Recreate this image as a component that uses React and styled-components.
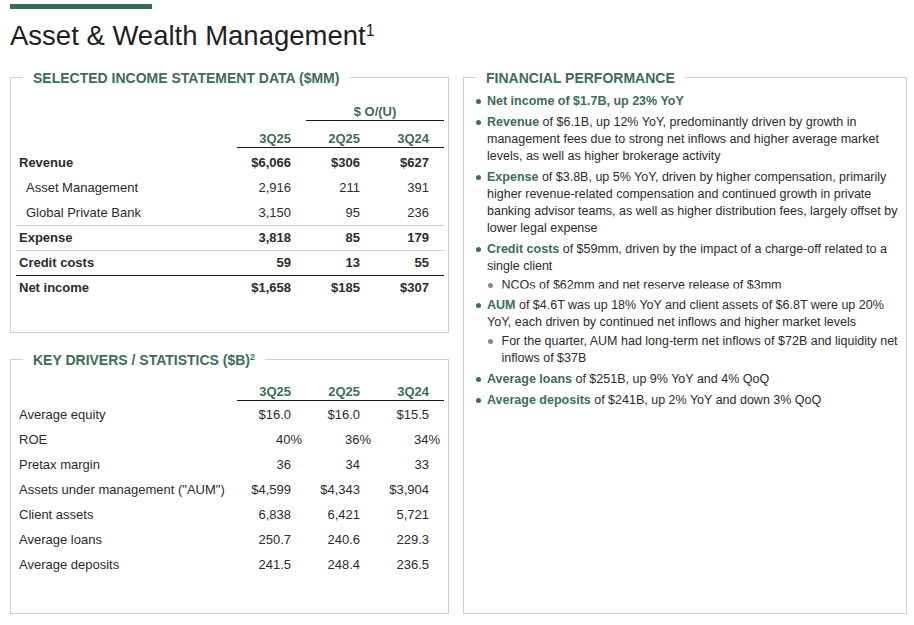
import React from "react";
import styled, { createGlobalStyle } from "styled-components";

const GREEN = "#3d6d57";
const TEXT = "#2b2b2b";

const Global = createGlobalStyle`
  html, body { margin: 0; padding: 0; background: #fff; }
  body { font-family: "Liberation Sans", Arial, sans-serif; color: ${TEXT}; }
  * { box-sizing: border-box; }
`;

const Page = styled.div`
  width: 914px;
  height: 625px;
  padding: 4px 8px 0 10px;
  overflow: hidden;
`;

const TopBar = styled.div`
  width: 142px;
  height: 5px;
  background: #3b6a57;
`;

const Title = styled.h1`
  margin: 12px 0 0;
  font-size: 27.5px;
  line-height: 30px;
  font-weight: normal;
  color: #1f1f1f;
`;

const Sup = styled.sup`
  font-size: ${(p) => p.$size || 16}px;
  line-height: 0;
  vertical-align: ${(p) => p.$lift || 9}px;
`;

const Content = styled.div`
  display: grid;
  grid-template-columns: 439px 444px;
  column-gap: 14px;
  margin-top: 26px;
`;

const Column = styled.div`
  display: flex;
  flex-direction: column;
  gap: 26px;
`;

const Panel = styled.section`
  height: ${(p) => p.$h}px;
  border: 1px solid #cfcfcf;
  display: flex;
  flex-direction: column;
  padding: 0 ${(p) => p.$pr || 4}px 0 5px;
`;

const Legend = styled.h2`
  align-self: flex-start;
  margin: -8px 0 0 7px;
  padding: 0 10px;
  background: #fff;
  font-size: 14px;
  line-height: 16px;
  font-weight: bold;
  color: ${GREEN};
`;

const Row = styled.div`
  display: grid;
  grid-template-columns: 1fr 69px 69px 69px;
  height: 25px;
  line-height: 24px;
  font-size: 13px;
  border-bottom: ${(p) =>
    p.$rule === "dark"
      ? "1.5px solid #1a1a1a"
      : p.$rule === "light"
      ? "1px solid #cfcfcf"
      : "1px solid transparent"};
  font-weight: ${(p) => (p.$bold ? "bold" : "normal")};
`;

const Label = styled.div`
  padding-left: ${(p) => (p.$indent ? 10 : 3)}px;
  white-space: nowrap;
`;

const Val = styled.div`
  text-align: right;
  padding-right: ${(p) => (p.$hang ? 4 : 15)}px;
`;

const OverRow = styled.div`
  display: grid;
  grid-template-columns: 1fr 69px 69px 69px;
  margin-top: 18px;
`;

const OverHead = styled.div`
  grid-column: 3 / 5;
  text-align: center;
  font-size: 13px;
  line-height: 16px;
  font-weight: bold;
  color: ${GREEN};
  border-bottom: 1.5px solid #1a1a1a;
`;

const HeadRow = styled.div`
  display: grid;
  grid-template-columns: 1fr 207px;
  margin-top: ${(p) => p.$mt}px;
  margin-bottom: ${(p) => p.$mb}px;
`;

const HeadCells = styled.div`
  grid-column: 2;
  display: grid;
  grid-template-columns: repeat(3, 69px);
  border-bottom: 1.5px solid #1a1a1a;
`;

const HeadCell = styled.div`
  text-align: right;
  padding-right: 15px;
  font-size: 13px;
  line-height: 16px;
  font-weight: bold;
  color: ${GREEN};
`;

const List = styled.ul`
  list-style: none;
  margin: 7px 0 0;
  padding: 0;
  font-size: 12.5px;
  line-height: 17px;
  color: ${TEXT};
`;

const Item = styled.li`
  display: flex;
  margin-top: ${(p) => (p.$sub ? 2 : 4)}px;
  &:first-child { margin-top: ${(p) => (p.$sub ? 2 : 0)}px; }
`;

const Dot = styled.span`
  flex: none;
  width: ${(p) => (p.$sub ? 4.5 : 5)}px;
  height: ${(p) => (p.$sub ? 4.5 : 5)}px;
  border-radius: 50%;
  background: ${(p) => (p.$sub ? "#8a8a8a" : GREEN)};
  margin: 6px ${(p) => (p.$sub ? 9 : 6)}px 0 ${(p) => (p.$sub ? 1 : 7)}px;
`;

const Body = styled.div`
  flex: 1;
  min-width: 0;
`;

const Line = styled.div`
  height: ${(p) => (p.$clip ? "16px" : "auto")};
  clip-path: ${(p) => (p.$clip ? "inset(0 0 4.5px 0)" : "none")};
`;

const SubList = styled.ul`
  list-style: none;
  margin: 0;
  padding: 0;
`;

const Em = styled.span`
  color: ${GREEN};
  font-weight: bold;
`;

const quarters = ["3Q25", "2Q25", "3Q24"];

const income = [
  { label: "Revenue", v: ["$6,066", "$306", "$627"], bold: true },
  { label: "Asset Management", v: ["2,916", "211", "391"], indent: true },
  { label: "Global Private Bank", v: ["3,150", "95", "236"], indent: true, rule: "light" },
  { label: "Expense", v: ["3,818", "85", "179"], bold: true, rule: "light" },
  { label: "Credit costs", v: ["59", "13", "55"], bold: true, rule: "dark" },
  { label: "Net income", v: ["$1,658", "$185", "$307"], bold: true },
];

const drivers = [
  { label: "Average equity", v: ["$16.0", "$16.0", "$15.5"] },
  { label: "ROE", v: ["40%", "36%", "34%"], hang: true },
  { label: "Pretax margin", v: ["36", "34", "33"] },
  { label: 'Assets under management ("AUM")', v: ["$4,599", "$4,343", "$3,904"] },
  { label: "Client assets", v: ["6,838", "6,421", "5,721"] },
  { label: "Average loans", v: ["250.7", "240.6", "229.3"] },
  { label: "Average deposits", v: ["241.5", "248.4", "236.5"] },
];

function Head({ mt, mb }) {
  return (
    <HeadRow $mt={mt} $mb={mb}>
      <HeadCells>
        {quarters.map((q) => (
          <HeadCell key={q}>{q}</HeadCell>
        ))}
      </HeadCells>
    </HeadRow>
  );
}

function DataRow({ r }) {
  return (
    <Row $bold={r.bold} $rule={r.rule}>
      <Label $indent={r.indent}>{r.label}</Label>
      {r.v.map((x, i) => (
        <Val key={i} $hang={r.hang}>
          {x}
        </Val>
      ))}
    </Row>
  );
}

export default function App() {
  return (
    <Page>
      <Global />
      <TopBar />
      <Title>
        Asset &amp; Wealth Management<Sup>1</Sup>
      </Title>
      <Content>
        <Column>
          <Panel $h={256}>
            <Legend>SELECTED INCOME STATEMENT DATA ($MM)</Legend>
            <OverRow>
              <OverHead>$ O/(U)</OverHead>
            </OverRow>
            <Head mt={10} mb={3} />
            {income.map((r) => (
              <DataRow key={r.label} r={r} />
            ))}
          </Panel>
          <Panel $h={255}>
            <Legend>
              KEY DRIVERS / STATISTICS ($B)<Sup $size={9} $lift={5}>2</Sup>
            </Legend>
            <Head mt={16} mb={2} />
            {drivers.map((r) => (
              <DataRow key={r.label} r={r} />
            ))}
          </Panel>
        </Column>
        <Panel $h={537} $pr={6}>
          <Legend>FINANCIAL PERFORMANCE</Legend>
          <List>
            <Item>
              <Dot />
              <Body>
                <Em>Net income of $1.7B, up 23% YoY</Em>
              </Body>
            </Item>
            <Item>
              <Dot />
              <Body>
                <Em>Revenue</Em> of $6.1B, up 12% YoY, predominantly driven by growth in
                management fees due to strong net inflows and higher average market
                levels, as well as higher brokerage activity
              </Body>
            </Item>
            <Item>
              <Dot />
              <Body>
                <Em>Expense</Em> of $3.8B, up 5% YoY, driven by higher compensation, primarily
                higher revenue-related compensation and continued growth in private
                banking advisor teams, as well as higher distribution fees, largely offset by
                lower legal expense
              </Body>
            </Item>
            <Item>
              <Dot />
              <Body>
                <Em>Credit costs</Em> of $59mm, driven by the impact of a charge-off related to a
                single client
                <SubList>
                  <Item $sub>
                    <Dot $sub />
                    <Body>
                      <Line $clip>NCOs of $62mm and net reserve release of $3mm</Line>
                    </Body>
                  </Item>
                </SubList>
              </Body>
            </Item>
            <Item>
              <Dot />
              <Body>
                <Em>AUM</Em> of $4.6T was up 18% YoY and client assets of $6.8T were up 20%
                YoY, each driven by continued net inflows and higher market levels
                <SubList>
                  <Item $sub>
                    <Dot $sub />
                    <Body>
                      For the quarter, AUM had long-term net inflows of $72B and liquidity net
                      inflows of $37B
                    </Body>
                  </Item>
                </SubList>
              </Body>
            </Item>
            <Item>
              <Dot />
              <Body>
                <Em>Average loans</Em> of $251B, up 9% YoY and 4% QoQ
              </Body>
            </Item>
            <Item>
              <Dot />
              <Body>
                <Em>Average deposits</Em> of $241B, up 2% YoY and down 3% QoQ
              </Body>
            </Item>
          </List>
        </Panel>
      </Content>
    </Page>
  );
}
